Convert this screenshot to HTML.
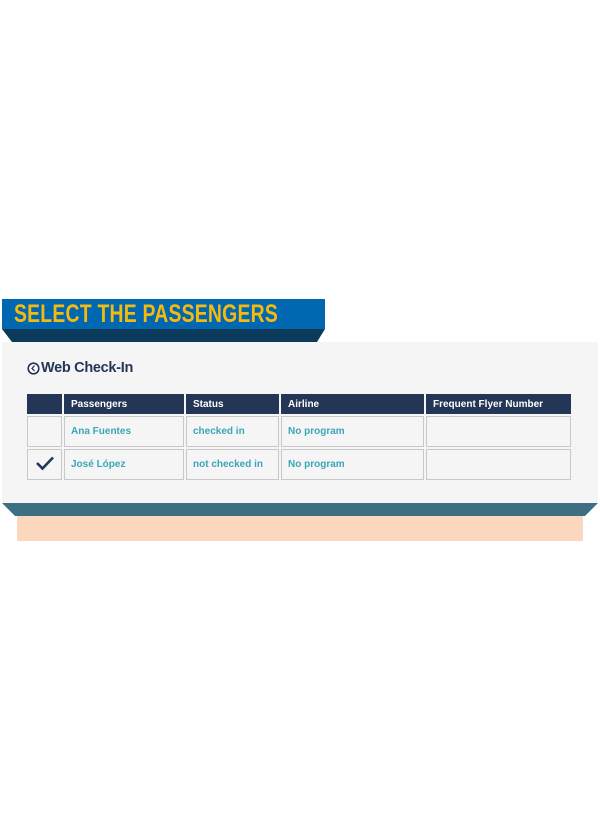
<!DOCTYPE html>
<html><head><style>
body{margin:0;width:600px;height:825px;background:#fff;position:relative;font-family:"Liberation Sans",sans-serif;overflow:hidden}
.abs{position:absolute}
.title{left:14px;top:300px;font-weight:bold;font-size:25px;color:#f6b90f;white-space:nowrap;transform-origin:left top;transform:scaleX(0.775);letter-spacing:0.3px}
table{position:absolute;left:25px;top:392px;border-collapse:separate;border-spacing:2px;font-size:10px;font-weight:bold}
td,th{padding:0 0 0 6px;text-align:left}
th{background:#233656;color:#fff;height:18px;border:1px solid #233656}
td{background:#f5f5f5;border:1px solid #c8c8c8;color:#3aa6b9;height:29px}
</style></head><body>
<div class="abs" style="left:2px;top:299px;width:323px;height:30px;background:#0067b1"></div>
<svg class="abs" style="left:0;top:329px" width="600" height="14"><polygon points="2,0 325,0 317,13 12,13" fill="#0b3a5a"/></svg>
<div class="abs title">SELECT THE PASSENGERS</div>
<div class="abs" style="left:2px;top:342px;width:596px;height:161px;background:#f5f5f5"></div>
<svg class="abs" style="left:0;top:503px" width="600" height="14"><polygon points="2,0 598,0 585,13 15,13" fill="#3e6e82"/></svg>
<div class="abs" style="left:17px;top:516px;width:566px;height:25px;background:#fbd8bd"></div>
<svg class="abs" style="left:27px;top:362px" width="13" height="13"><circle cx="6.5" cy="6.5" r="5.3" fill="#fff" stroke="#233656" stroke-width="1.6"/><path d="M7.5 3.5 L5 6.5 L7.5 9" stroke="#233656" stroke-width="1.3" fill="none"/></svg>
<div class="abs" style="left:41px;top:360px;font-size:14.5px;font-weight:bold;color:#233656;letter-spacing:-0.3px">Web Check-In</div>
<table>
<tr><th style="width:27px"></th><th style="width:112px">Passengers</th><th style="width:85px">Status</th><th style="width:135px">Airline</th><th style="width:137px">Frequent Flyer Number</th></tr>
<tr><td></td><td>Ana Fuentes</td><td>checked in</td><td>No program</td><td></td></tr>
<tr><td style="padding:0;text-align:center"><svg width="20" height="16"><path d="M2 8 L7.5 13.5 L18 2.5" stroke="#233656" stroke-width="2.6" fill="none"/></svg></td><td>José López</td><td>not checked in</td><td>No program</td><td></td></tr>
</table>
</body></html>
